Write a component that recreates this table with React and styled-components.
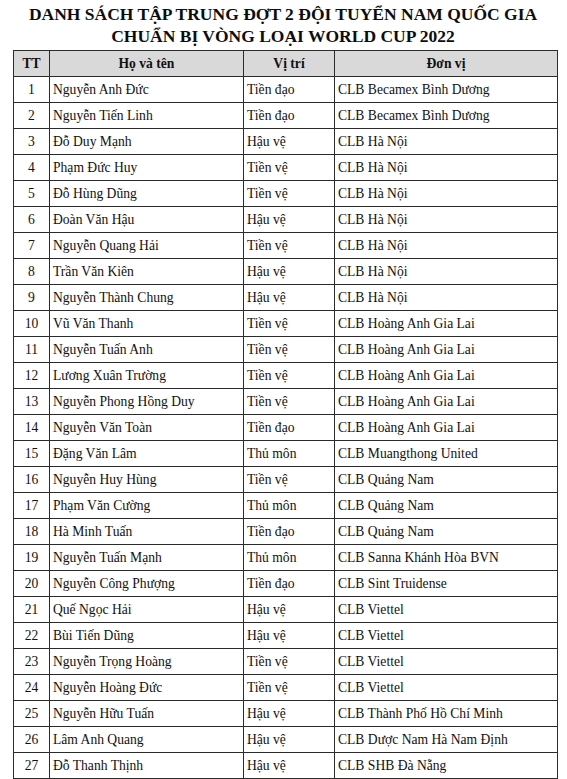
import React from "react";
import styled, { createGlobalStyle } from "styled-components";

const GlobalStyle = createGlobalStyle`
  html, body {
    margin: 0;
    padding: 0;
    background: #fff;
  }
  body {
    font-family: "Liberation Serif", "Times New Roman", serif;
    color: #111;
  }
`;

const Page = styled.div`
  width: 567px;
  padding: 3px 0 0 13px;
  box-sizing: border-box;
`;

const Title = styled.h1`
  margin: 0 0 3px;
  width: 540px;
  font-size: 17.5px;
  line-height: 22px;
  font-weight: bold;
  text-align: center;
  color: #0d0d0d;
`;

const Table = styled.table`
  border-collapse: collapse;
  table-layout: fixed;
  width: 540px;
  font-size: 13.6px;
`;

const Head = styled.th`
  background: #d9d9d9;
  border: 1px solid #2b2b2b;
  height: 25px;
  padding: 0;
  font-weight: bold;
  text-align: center;
  width: ${(p) => p.$w}px;
`;

const Cell = styled.td`
  border: 1px solid #2b2b2b;
  height: 24px;
  padding: 1px 0 0 ${(p) => (p.$center ? 0 : 3)}px;
  text-align: ${(p) => (p.$center ? "center" : "left")};
  white-space: nowrap;
`;

const players = [
  ["Nguyễn Anh Đức", "Tiền đạo", "CLB Becamex Bình Dương"],
  ["Nguyễn Tiến Linh", "Tiền đạo", "CLB Becamex Bình Dương"],
  ["Đỗ Duy Mạnh", "Hậu vệ", "CLB Hà Nội"],
  ["Phạm Đức Huy", "Tiền vệ", "CLB Hà Nội"],
  ["Đỗ Hùng Dũng", "Tiền vệ", "CLB Hà Nội"],
  ["Đoàn Văn Hậu", "Hậu vệ", "CLB Hà Nội"],
  ["Nguyễn Quang Hải", "Tiền vệ", "CLB Hà Nội"],
  ["Trần Văn Kiên", "Hậu vệ", "CLB Hà Nội"],
  ["Nguyễn Thành Chung", "Hậu vệ", "CLB Hà Nội"],
  ["Vũ Văn Thanh", "Tiền vệ", "CLB Hoàng Anh Gia Lai"],
  ["Nguyễn Tuấn Anh", "Tiền vệ", "CLB Hoàng Anh Gia Lai"],
  ["Lương Xuân Trường", "Tiền vệ", "CLB Hoàng Anh Gia Lai"],
  ["Nguyễn Phong Hồng Duy", "Tiền vệ", "CLB Hoàng Anh Gia Lai"],
  ["Nguyễn Văn Toàn", "Tiền đạo", "CLB Hoàng Anh Gia Lai"],
  ["Đặng Văn Lâm", "Thủ môn", "CLB Muangthong United"],
  ["Nguyễn Huy Hùng", "Tiền vệ", "CLB Quảng Nam"],
  ["Phạm Văn Cường", "Thủ môn", "CLB Quảng Nam"],
  ["Hà Minh Tuấn", "Tiền đạo", "CLB Quảng Nam"],
  ["Nguyễn Tuấn Mạnh", "Thủ môn", "CLB Sanna Khánh Hòa BVN"],
  ["Nguyễn Công Phượng", "Tiền đạo", "CLB Sint Truidense"],
  ["Quế Ngọc Hải", "Hậu vệ", "CLB Viettel"],
  ["Bùi Tiến Dũng", "Hậu vệ", "CLB Viettel"],
  ["Nguyễn Trọng Hoàng", "Tiền vệ", "CLB Viettel"],
  ["Nguyễn Hoàng Đức", "Tiền vệ", "CLB Viettel"],
  ["Nguyễn Hữu Tuấn", "Hậu vệ", "CLB Thành Phố Hồ Chí Minh"],
  ["Lâm Anh Quang", "Hậu vệ", "CLB Dược Nam Hà Nam Định"],
  ["Đỗ Thanh Thịnh", "Hậu vệ", "CLB SHB Đà Nẵng"],
];

export default function App() {
  return (
    <Page>
      <GlobalStyle />
      <Title>
        DANH SÁCH TẬP TRUNG ĐỢT 2 ĐỘI TUYỂN NAM QUỐC GIA
        <br />
        CHUẨN BỊ VÒNG LOẠI WORLD CUP 2022
      </Title>
      <Table>
        <thead>
          <tr>
            <Head $w={35}>TT</Head>
            <Head $w={193}>Họ và tên</Head>
            <Head $w={90}>Vị trí</Head>
            <Head $w={222}>Đơn vị</Head>
          </tr>
        </thead>
        <tbody>
          {players.map((p, i) => (
            <tr key={i}>
              <Cell $center>{i + 1}</Cell>
              <Cell>{p[0]}</Cell>
              <Cell>{p[1]}</Cell>
              <Cell>{p[2]}</Cell>
            </tr>
          ))}
        </tbody>
      </Table>
    </Page>
  );
}
